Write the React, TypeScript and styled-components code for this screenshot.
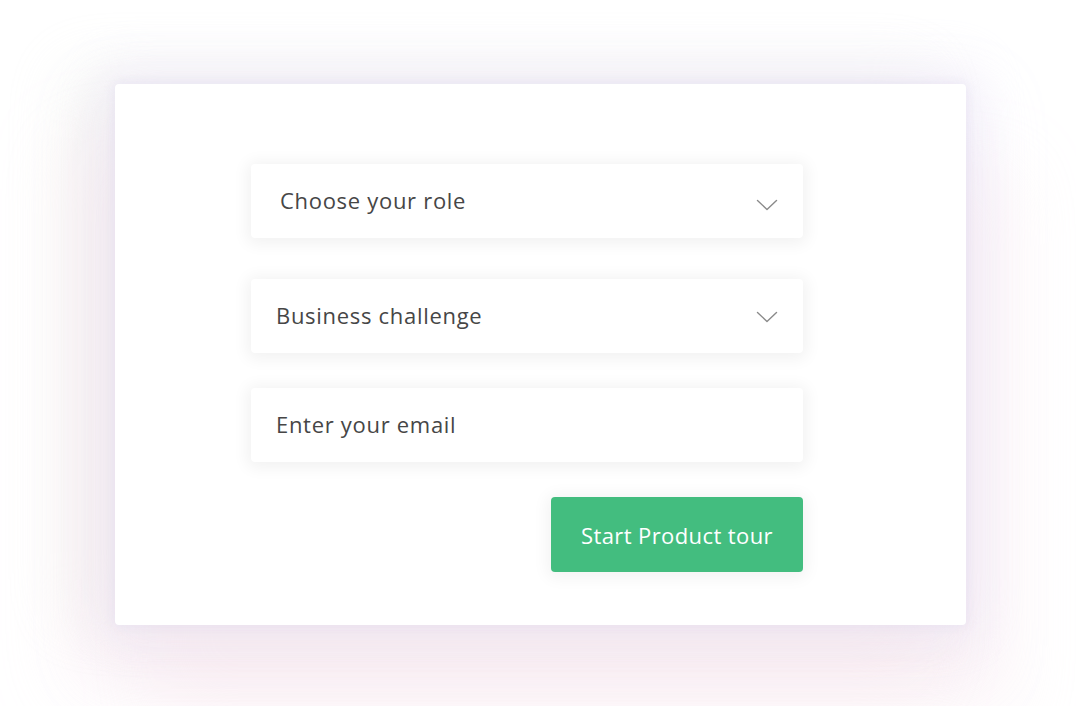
import React from 'react';
import styled, { createGlobalStyle } from 'styled-components';

const GlobalStyle = createGlobalStyle`
  html, body {
    margin: 0;
    padding: 0;
    background: #ffffff;
    font-family: 'Open Sans', 'Liberation Sans', sans-serif;
  }
`;

function Chevron() {
  return (
    <svg width="22" height="12" viewBox="0 0 22 12" fill="none">
      <path d="M1.5 1.5l9.5 9L20.5 1.5" stroke="#8a8a8a" strokeWidth="1.4" strokeLinecap="round" strokeLinejoin="round" />
    </svg>
  );
}

function App() {
  return (
    <Page>
      <GlobalStyle />
      <Card>
        <Form>
          <Field pad={29} drop={8}>
            <FieldText>Choose your role</FieldText>
            <Chevron />
          </Field>
          <Field pad={25}>
            <FieldText>Business challenge</FieldText>
            <Chevron />
          </Field>
          <Field pad={25}>
            <FieldText>Enter your email</FieldText>
          </Field>
          <Actions>
            <StartButton>Start Product tour</StartButton>
          </Actions>
        </Form>
      </Card>
    </Page>
  );
}

export default App;

const Page = styled.div`
  width: 1076px;
  height: 706px;
  display: flex;
  align-items: flex-start;
  padding-top: 84px;
  padding-left: 115px;
  box-sizing: border-box;
  overflow: hidden;
`;

const Card = styled.div`
  width: 851px;
  height: 541px;
  background: #ffffff;
  border-radius: 4px;
  box-sizing: border-box;
  padding: 80px 163px 0 136px;
  box-shadow:
    0 0 10px 2px rgba(225, 220, 238, 0.45),
    0 -6px 50px 14px rgba(232, 226, 245, 0.4),
    -45px 60px 70px 6px rgba(248, 222, 230, 0.28),
    -45px -10px 60px 6px rgba(232, 236, 226, 0.3),
    45px 90px 70px 6px rgba(248, 226, 234, 0.28),
    0 30px 60px 16px rgba(234, 228, 246, 0.35);
`;

const Form = styled.div`
  display: flex;
  flex-direction: column;
  gap: 35px;
  width: 552px;
`;

const Field = styled.div<{ pad: number; drop?: number }>`
  height: 74px;
  background: #ffffff;
  border-radius: 4px;
  box-shadow: 0 2px 16px 4px rgba(0, 0, 0, 0.055);
  display: flex;
  align-items: center;
  justify-content: space-between;
  padding: 0 25px 0 ${(p) => p.pad}px;
  box-sizing: border-box;

  &:first-child {
    margin-bottom: 6px;
  }

  svg {
    margin-top: ${(p) => p.drop ?? 2}px;
  }
`;

const FieldText = styled.span`
  font-size: 22px;
  color: #464646;
  letter-spacing: 0.7px;
  margin-top: -2px;
`;

const Actions = styled.div`
  display: flex;
  justify-content: flex-end;
`;

const StartButton = styled.button`
  width: 252px;
  height: 75px;
  border: none;
  border-radius: 4px;
  background: #43bd7f;
  color: #ffffff;
  font-family: 'Open Sans', 'Liberation Sans', sans-serif;
  font-size: 22px;
  letter-spacing: 0.4px;
  box-shadow: 0 2px 16px 4px rgba(0, 0, 0, 0.05);
  cursor: pointer;
`;
